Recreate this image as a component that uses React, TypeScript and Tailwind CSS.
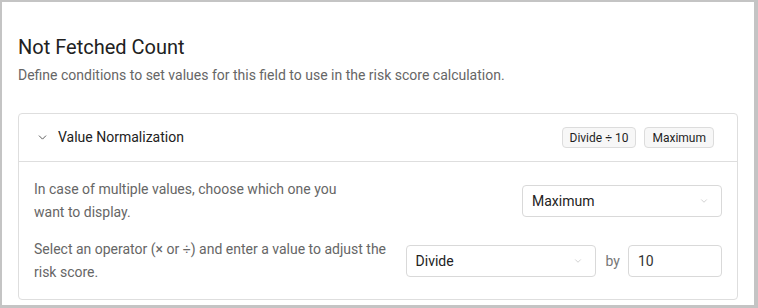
import { ChevronDown } from "lucide-react";

const Chip = ({ children }: { children: React.ReactNode }) => (
  <span className="inline-flex items-center h-[21px] px-[7px] rounded-[4px] border border-[#dcdcdc] bg-[#f7f7f7] text-[12px] text-[#1f1f1f]">
    {children}
  </span>
);

const FakeSelect = ({ value, className }: { value: string; className: string }) => (
  <div
    className={`flex items-center justify-between h-[32px] pl-[9px] pr-[12px] rounded-[4px] border border-[#d9d9d9] bg-white text-[14px] text-[#222] ${className}`}
  >
    <span>{value}</span>
    <ChevronDown className="w-[10px] h-[10px] text-[#a8a8a8]" strokeWidth={1.25} />
  </div>
);

export default function App() {
  return (
    <div
      className="w-[758px] h-[308px] bg-white border-t-2 border-l-2 border-r-4 border-b-[3px] border-[#c4c4c4] px-[16px] pt-[33px] overflow-hidden"
      style={{ fontFamily: "Roboto, 'Liberation Sans', sans-serif" }}
    >
      {/* header */}
      <h1 className="text-[20px] leading-[24px] text-[#212121]">Not Fetched Count</h1>
      <p className="mt-[6px] text-[14px] leading-[20px] text-[#666]">
        Define conditions to set values for this field to use in the risk score calculation.
      </p>

      {/* card */}
      <div className="mt-[28px] w-[720px] rounded-[4px] border border-[#dedede]">
        <div className="flex items-center justify-between h-[48px] pl-[17px] pr-[23px] border-b border-[#dedede]">
          <div className="flex items-center gap-[9px]">
            <ChevronDown className="w-[13px] h-[13px] text-[#555]" strokeWidth={1.75} />
            <span className="text-[14px] text-[#222]">Value Normalization</span>
          </div>
          <div className="flex items-center gap-[8px]">
            <Chip>Divide ÷ 10</Chip>
            <Chip>Maximum</Chip>
          </div>
        </div>

        <div className="px-[15px] pt-[16px] pb-[15px] flex flex-col gap-[14px]">
          <div className="flex items-center justify-between">
            <p className="w-[320px] text-[14px] leading-[23px] text-[#666]">
              In case of multiple values, choose which one you want to display.
            </p>
            <FakeSelect value="Maximum" className="w-[200px]" />
          </div>

          <div className="flex items-center justify-between">
            <p className="w-[360px] text-[14px] leading-[23px] text-[#666]">
              Select an operator (× or ÷) and enter a value to adjust the risk score.
            </p>
            <div className="flex items-center">
              <FakeSelect value="Divide" className="w-[190px]" />
              <span className="ml-[10px] mr-[8px] text-[14px] text-[#777]">by</span>
              <div className="flex items-center w-[94px] h-[32px] pl-[9px] rounded-[4px] border border-[#d9d9d9] text-[14px] text-[#333]">
                10
              </div>
            </div>
          </div>
        </div>
      </div>
    </div>
  );
}
